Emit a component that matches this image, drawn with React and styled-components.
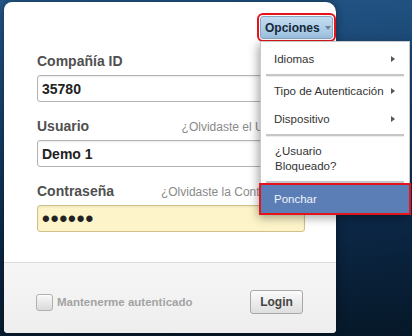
import React from "react";
import styled, { createGlobalStyle } from "styled-components";

const GlobalStyle = createGlobalStyle`
  html, body {
    margin: 0;
    padding: 0;
    height: 336px;
    overflow: hidden;
  }
  body {
    font-family: "Liberation Sans", Arial, sans-serif;
    background: linear-gradient(175deg, #24588a 0%, #143d66 38%, #0b2644 70%, #061828 100%);
  }
`;

const Page = styled.div`
  box-sizing: border-box;
  height: 336px;
  padding: 2px 0 0 4px;
`;

const Card = styled.div`
  position: relative;
  width: 332px;
  height: 331px;
  background: #fff;
  border-radius: 8px 10px 4px 4px;
  box-shadow: 0 0 8px rgba(0, 0, 0, 0.45);
  display: flex;
  flex-direction: column;
`;

const Form = styled.div`
  flex: 1;
  padding: 51px 31px 0 33px;
  display: flex;
  flex-direction: column;
  gap: 16px;
`;

const Field = styled.div`
  display: flex;
  flex-direction: column;
  gap: 6px;
`;

const LabelRow = styled.div`
  display: flex;
  justify-content: space-between;
  align-items: baseline;
  height: 16px;
  padding-right: 2px;
`;

const Label = styled.label`
  font-size: 14px;
  font-weight: bold;
  color: #505050;
  line-height: 16px;
`;

const Forgot = styled.a`
  font-size: 12px;
  color: #8a8a8a;
  text-decoration: none;
`;

const Input = styled.input`
  box-sizing: border-box;
  width: 100%;
  height: 27px;
  margin: 0;
  padding: 0 4px;
  border: 1px solid ${(p) => (p.$filled ? "#d2c08a" : "#b3b3b3")};
  border-radius: 3px;
  background: ${(p) => (p.$filled ? "#fdf5c9" : "#fff")};
  box-shadow: inset 0 1px 2px rgba(0, 0, 0, 0.08);
  font-family: "Liberation Sans", Arial, sans-serif;
  font-size: ${(p) => (p.$dots ? "22px" : "14px")};
  letter-spacing: ${(p) => (p.$dots ? "1px" : "0")};
  font-weight: bold;
  color: #222;
  outline: none;
`;

const Footer = styled.div`
  height: 71px;
  box-sizing: border-box;
  border-top: 1px solid #dcdcdc;
  border-radius: 0 0 4px 4px;
  background: linear-gradient(#f6f6f6, #eeeeee);
  display: flex;
  align-items: flex-start;
  justify-content: space-between;
  padding: 27px 33px 0 32px;
`;

const Remember = styled.label`
  display: flex;
  align-items: center;
  gap: 4px;
  height: 24px;
  font-size: 11.5px;
  font-weight: bold;
  color: #a3a3a3;
`;

const Check = styled.span`
  box-sizing: border-box;
  width: 17px;
  height: 17px;
  border: 1px solid #b0b0b0;
  border-radius: 3px;
  background: linear-gradient(#f8f8f8, #d9d9d9);
  box-shadow: inset 0 1px 1px rgba(255, 255, 255, 0.8);
`;

const LoginButton = styled.button`
  box-sizing: border-box;
  width: 53px;
  height: 24px;
  border: 1px solid #a9a9a9;
  border-radius: 3px;
  background: linear-gradient(#fbfbfb, #dedede);
  font-family: "Liberation Sans", Arial, sans-serif;
  font-size: 12px;
  font-weight: bold;
  color: #454545;
  padding: 0;
`;

const OptionsButton = styled.button`
  position: absolute;
  top: 14px;
  right: 3px;
  box-sizing: border-box;
  width: 73px;
  height: 23px;
  padding: 0 0 0 4px;
  display: flex;
  align-items: center;
  gap: 5px;
  border: 1px solid #86a9c8;
  border-radius: 3px;
  background: linear-gradient(#c4dcef, #9cc1df);
  font-family: "Liberation Sans", Arial, sans-serif;
  font-size: 12px;
  font-weight: bold;
  color: #15283a;
  outline: 2px solid #e3141b;
  outline-offset: 1px;
`;

const Caret = styled.span`
  width: 0;
  height: 0;
  border-left: 3.5px solid transparent;
  border-right: 3.5px solid transparent;
  border-top: 4px solid #6d8297;
`;

const Menu = styled.ul`
  position: absolute;
  top: 39px;
  left: 256px;
  box-sizing: border-box;
  width: 150px;
  margin: 0;
  padding: 3px 0 1px;
  list-style: none;
  background: #fff;
  border: 1px solid #c9c9c9;
  box-shadow: -2px 3px 9px rgba(0, 0, 0, 0.35);
  font-size: 11.5px;
  color: #333;
`;

const Item = styled.li`
  display: flex;
  align-items: center;
  justify-content: space-between;
  gap: 6px;
  min-height: 28px;
  padding: ${(p) => (p.$multi ? "7px 14px" : "0 14px 0 13px")};
  line-height: ${(p) => (p.$multi ? "15px" : "28px")};
  box-sizing: border-box;
  background: ${(p) => (p.$active ? "#5c7eb6" : "transparent")};
  color: ${(p) => (p.$active ? "#f0f4fb" : "#333")};
  outline: ${(p) => (p.$active ? "2px solid #e3141b" : "none")};
  margin-top: ${(p) => (p.$active ? "1px" : "0")};
  white-space: nowrap;
`;

const Arrow = styled.span`
  flex: none;
  width: 0;
  height: 0;
  border-top: 3.5px solid transparent;
  border-bottom: 3.5px solid transparent;
  border-left: 4px solid #555;
`;

const Separator = styled.li`
  margin: ${(p) => (p.$tight ? "0 5px" : "1px 5px 0")};
  border-top: 2px solid #c6c6c6;
  border-bottom: 1px solid #ececec;
`;

export default function App() {
  return (
    <>
      <GlobalStyle />
      <Page>
        <Card>
          <Form>
            <Field>
              <LabelRow>
                <Label>Compañía ID</Label>
              </LabelRow>
              <Input readOnly value="35780" />
            </Field>
            <Field>
              <LabelRow>
                <Label>Usuario</Label>
                <Forgot href="#">¿Olvidaste el Usuario?</Forgot>
              </LabelRow>
              <Input readOnly value="Demo 1" />
            </Field>
            <Field>
              <LabelRow>
                <Label>Contraseña</Label>
                <Forgot href="#">¿Olvidaste la Contraseña?</Forgot>
              </LabelRow>
              <Input readOnly value="••••••" $filled $dots />
            </Field>
          </Form>
          <Footer>
            <Remember>
              <Check />
              Mantenerme autenticado
            </Remember>
            <LoginButton>Login</LoginButton>
          </Footer>

          <OptionsButton>
            Opciones <Caret />
          </OptionsButton>
          <Menu>
            <Item>
              Idiomas <Arrow />
            </Item>
            <Separator />
            <Item>
              Tipo de Autenticación <Arrow />
            </Item>
            <Item>
              Dispositivo <Arrow />
            </Item>
            <Separator />
            <Item $multi>
              <span>
                ¿Usuario
                <br />
                Bloqueado?
              </span>
            </Item>
            <Separator $tight />
            <Item $active>Ponchar</Item>
          </Menu>
        </Card>
      </Page>
    </>
  );
}
